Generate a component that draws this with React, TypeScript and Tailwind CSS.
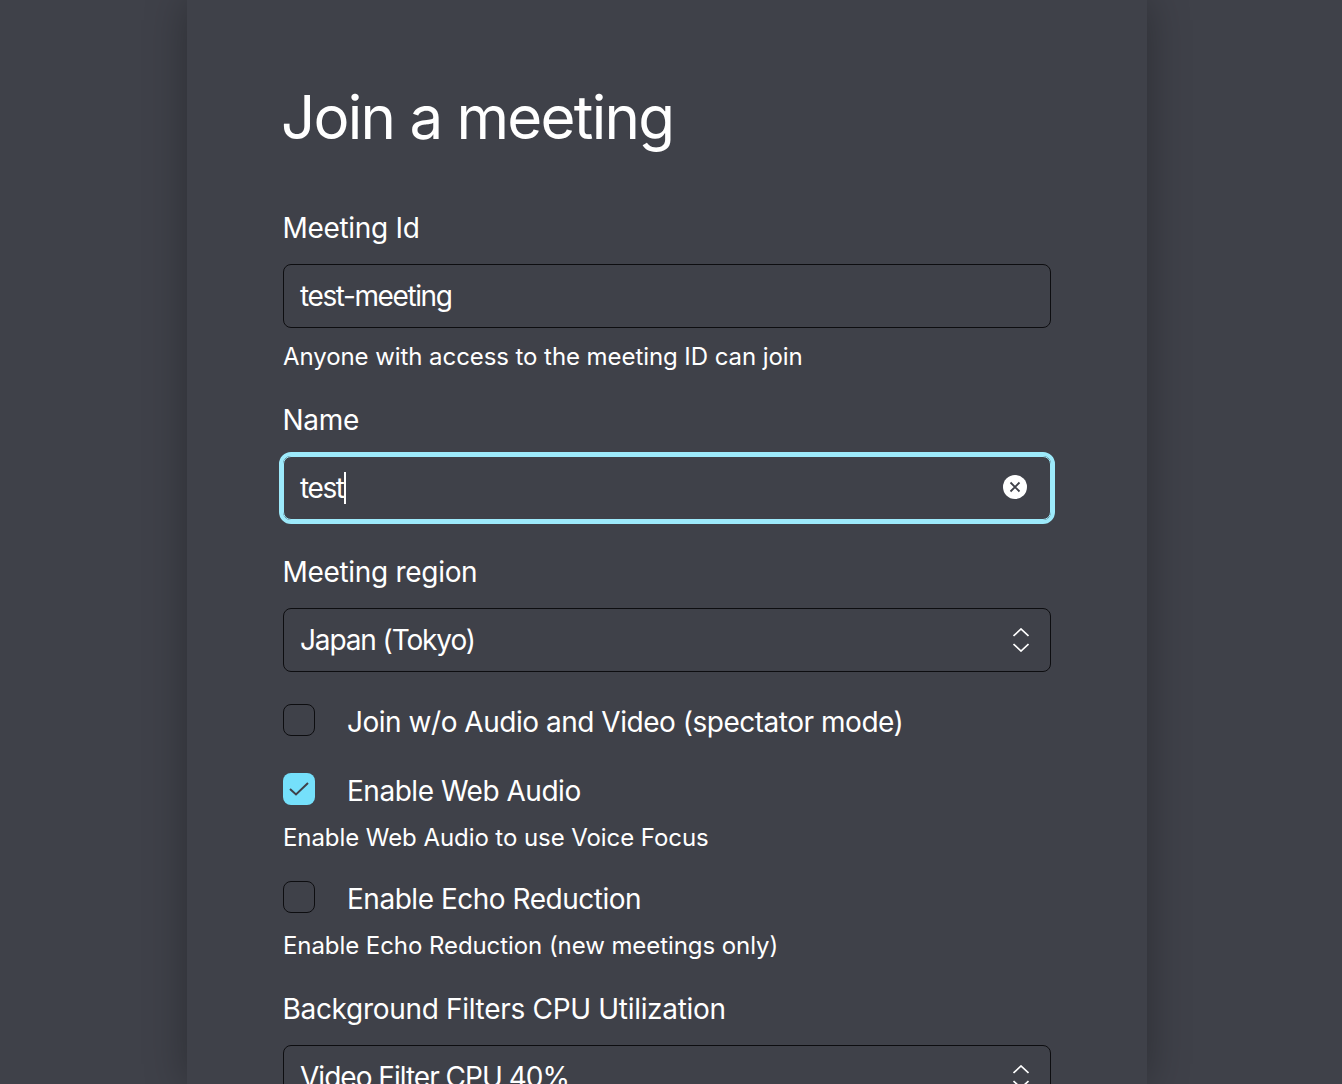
const font = "font-['Inter',sans-serif]";

function Chevrons() {
  return (
    <svg width="16" height="24" viewBox="0 0 16 24" fill="none" stroke="white" strokeWidth="1.7" className="absolute right-[21px] top-1/2 -translate-y-1/2">
      <path d="M0.5 8 L8 1 L15.5 8" />
      <path d="M0.5 16 L8 23 L15.5 16" />
    </svg>
  );
}

function Select({ value, tight }: { value: string; tight?: boolean }) {
  return (
    <div className={`relative flex h-16 items-center rounded-lg border border-[#0d0d10] px-4 text-[28px] text-white ${tight ? "tracking-[-0.04em]" : "tracking-[-0.035em]"}`}>
      {value}
      <Chevrons />
    </div>
  );
}

function Label({ children }: { children: React.ReactNode }) {
  return <div className="-ml-[0.5px] h-7 text-[28px] leading-7 tracking-[-0.011em] text-white">{children}</div>;
}

function Help({ children }: { children: React.ReactNode }) {
  return <div className="h-7 text-2xl leading-[30px] tracking-[-0.003em] text-white">{children}</div>;
}

function Check({ checked, label }: { checked?: boolean; label: string }) {
  return (
    <div className="flex items-start">
      {checked ? (
        <div className="flex h-8 w-8 items-center justify-center rounded-lg bg-[#75e0fb]">
          <svg width="20" height="14" viewBox="0 0 20 14" fill="none" stroke="#3f4149" strokeWidth="2">
            <path d="M1 7 L7 12.5 L19 1" />
          </svg>
        </div>
      ) : (
        <div className="h-8 w-8 rounded-lg border border-[#0d0d10]" />
      )}
      <span className="ml-8 text-[28px] leading-[37px] tracking-[-0.017em] text-white">{label}</span>
    </div>
  );
}

export default function App() {
  return (
    <div className={`h-[1084px] overflow-hidden bg-[#3f4149] ${font}`}>
      <div className="ml-[187px] h-[1084px] w-[960px] overflow-hidden bg-[#3f4149] px-24 pt-[80px] shadow-[0_0_40px_rgba(0,0,0,0.3)]">
        <h1 className="-ml-0.5 h-[76px] text-[60px] leading-[75px] tracking-[-0.029em] text-white">Join a meeting</h1>
        <div className="mt-[58px]"><Label>Meeting Id</Label></div>
        <div className="mt-[22px] flex h-16 items-center rounded-lg border border-[#0d0d10] px-4 text-[28px] tracking-[-0.05em] text-white">test-meeting</div>
        <div className="mt-3.5"><Help>Anyone with access to the meeting ID can join</Help></div>
        <div className="mt-9"><Label>Name</Label></div>
        <div className="relative mt-[22px] flex h-16 items-center rounded-lg border border-[#9deafb] px-4 text-[28px] tracking-[-0.05em] text-white outline-4 outline-[#9deafb]">
          test<span className="h-8 w-0.5 bg-white" />
          <svg width="24" height="24" viewBox="0 0 24 24" className="absolute right-[23px] top-[18px]">
            <circle cx="12" cy="12" r="12" fill="white" />
            <path d="M7.5 7.5 L16.5 16.5 M16.5 7.5 L7.5 16.5" stroke="#3f4149" strokeWidth="1.8" />
          </svg>
        </div>
        <div className="mt-[38px]"><Label>Meeting region</Label></div>
        <div className="mt-[22px]"><Select tight value="Japan (Tokyo)" /></div>
        <div className="mt-8"><Check label="Join w/o Audio and Video (spectator mode)" /></div>
        <div className="mt-8"><Check checked label="Enable Web Audio" /></div>
        <div className="mt-[13px]"><Help>Enable Web Audio to use Voice Focus</Help></div>
        <div className="mt-[30px]"><Check label="Enable Echo Reduction" /></div>
        <div className="mt-[13px]"><Help>Enable Echo Reduction (new meetings only)</Help></div>
        <div className="mt-[36px]"><Label>Background Filters CPU Utilization</Label></div>
        <div className="mt-[22px]"><Select value="Video Filter CPU 40%" /></div>
      </div>
    </div>
  );
}
